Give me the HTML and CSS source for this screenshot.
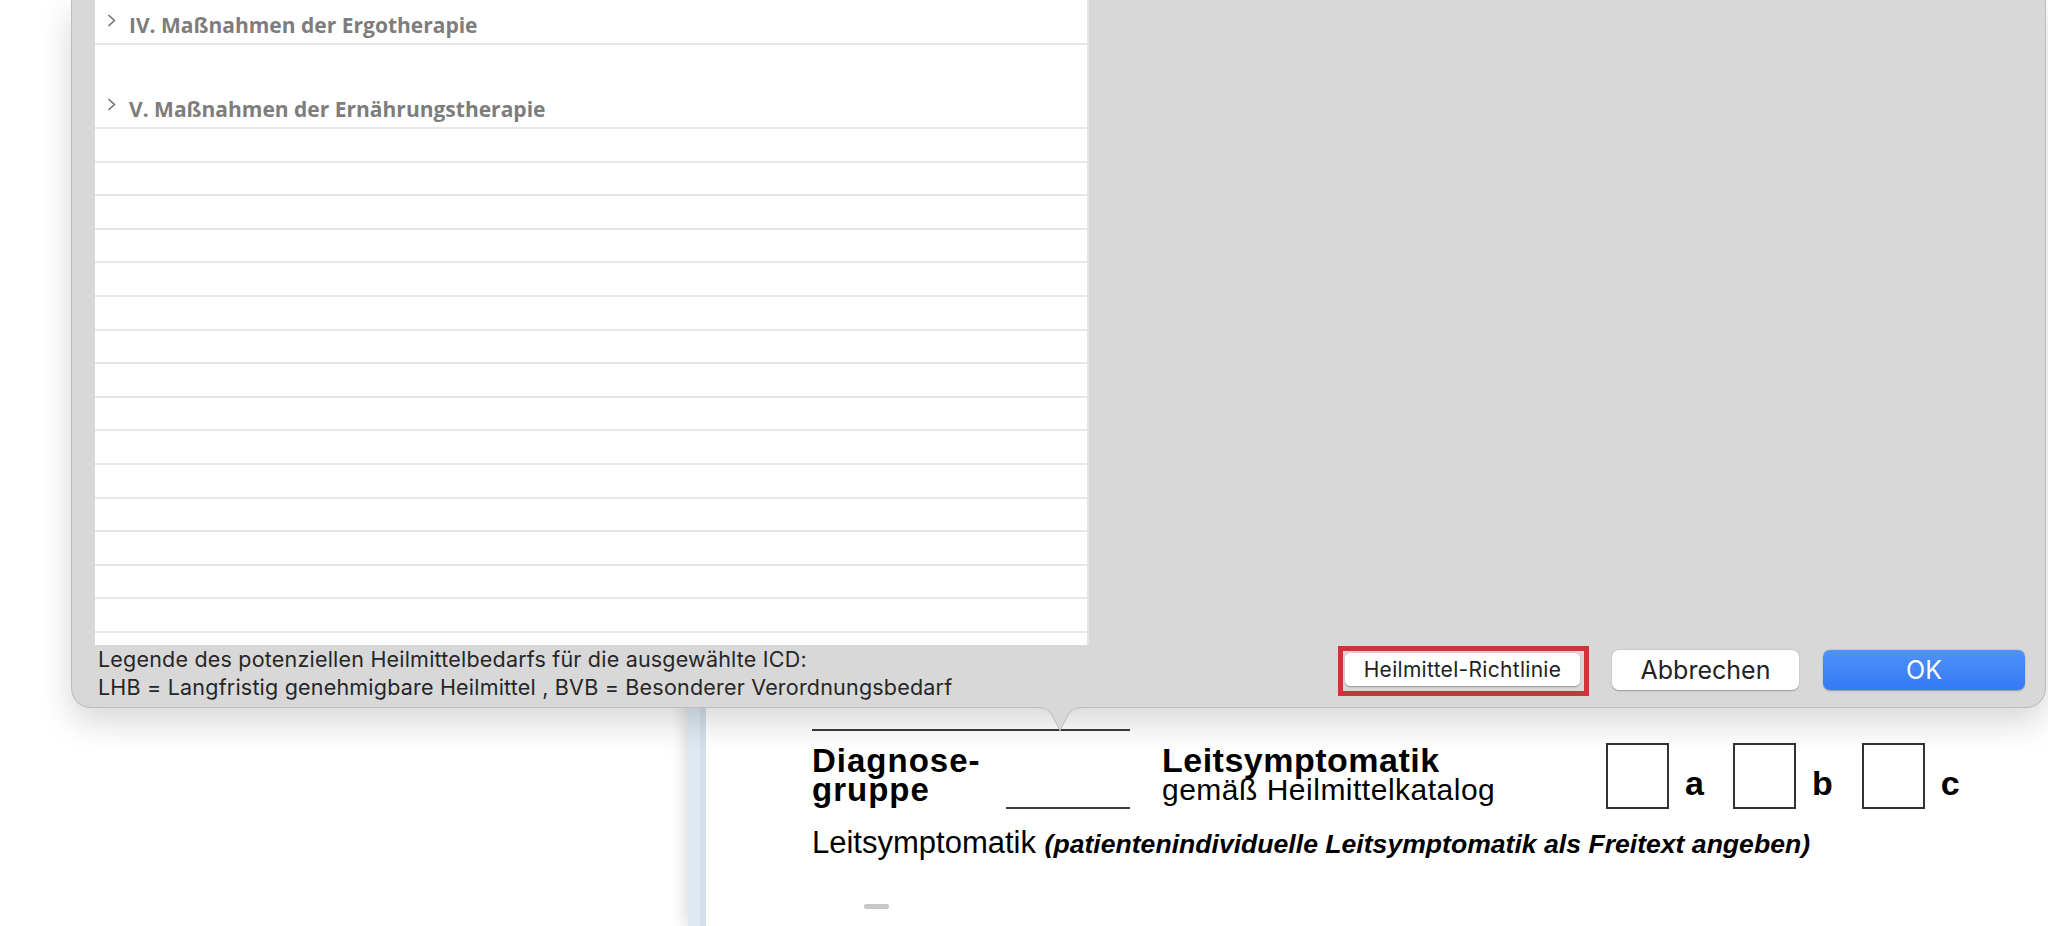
FILE: index.html
```html
<!DOCTYPE html>
<html lang="de">

<head>
  <meta charset="UTF-8" />
  <title>Heilmittel-Auswahl</title>
  <link rel="stylesheet" href="styles.css">
</head>

<body>
  <div class="desk">
    <div class="doc-window">
      <div class="doc-edge"></div>
      <div class="doc-page">
        <div class="rule-top"></div>
        <div class="head-row">
          <div class="dg">Diagnose-<br>gruppe</div>
          <div class="dg-field"></div>
          <div class="ls">
            <div class="ls-title">Leitsymptomatik</div>
            <div class="ls-sub">gemäß Heilmittelkatalog</div>
          </div>
          <div class="opts">
            <div class="opt"><span class="box"></span><span class="opt-label">a</span></div>
            <div class="opt"><span class="box"></span><span class="opt-label">b</span></div>
            <div class="opt"><span class="box"></span><span class="opt-label">c</span></div>
          </div>
        </div>
        <p class="ls-line">Leitsymptomatik <b><i>(patientenindividuelle Leitsymptomatik als Freitext angeben)</i></b></p>
        <div class="dash"></div>
      </div>
    </div>

    <div class="popover">
      <div class="pop-body">
        <div class="tree">
          <div class="row group first">
            <svg class="chev" viewBox="0 0 9 13"><path d="M1.5 1 L7.5 6.5 L1.5 12" /></svg>
            <span>IV. Maßnahmen der Ergotherapie</span>
          </div>
          <div class="row group">
            <svg class="chev" viewBox="0 0 9 13"><path d="M1.5 1 L7.5 6.5 L1.5 12" /></svg>
            <span>V. Maßnahmen der Ernährungstherapie</span>
          </div>
          <div class="row"></div>
          <div class="row"></div>
          <div class="row"></div>
          <div class="row"></div>
          <div class="row"></div>
          <div class="row"></div>
          <div class="row"></div>
          <div class="row"></div>
          <div class="row"></div>
          <div class="row"></div>
          <div class="row"></div>
          <div class="row"></div>
          <div class="row"></div>
          <div class="row"></div>
          <div class="row"></div>
          <div class="row"></div>
        </div>
      </div>
      <div class="pop-footer">
        <div class="legend">
          Legende des potenziellen Heilmittelbedarfs für die ausgewählte ICD:<br>
          LHB = Langfristig genehmigbare Heilmittel , BVB = Besonderer Verordnungsbedarf
        </div>
        <div class="actions">
          <div class="highlight"><button class="btn small">Heilmittel-Richtlinie</button></div>
          <button class="btn cancel">Abbrechen</button>
          <button class="btn primary">OK</button>
        </div>
      </div>
      <svg class="pop-arrow" viewBox="0 0 56 26">
        <path class="arrow-fill" d="M0 0 H56 V1 C44 1 40 2 36 9 L28 25 L20 9 C16 2 12 1 0 1 Z" />
        <path class="arrow-line" d="M0 1.5 C12 1.5 16 2.5 20 9 L28 24.5 L36 9 C40 2.5 44 1.5 56 1.5" />
      </svg>
    </div>
  </div>
</body>

</html>
```

FILE: styles.css
```css
body {
  margin: 0;
  background-color: #ffffff;
  overflow: hidden;
}

.desk {
  position: relative;
  width: 2048px;
  height: 926px;
  overflow: hidden;
}

/* document window behind the popover */
.doc-window {
  position: absolute;
  left: 688px;
  top: 0;
  right: 0;
  bottom: 0;
  display: flex;
  background-color: #ffffff;
  box-shadow: -4px 0 14px rgba(0, 0, 0, 0.14);
}

.doc-edge {
  flex: none;
  width: 18px;
  background: linear-gradient(to right, #dfe9f2 0 12px, #d3dfea 12px);
}

.doc-page {
  flex: 1;
  padding: 729px 0 0 106px;
  font-family: "Liberation Sans", Arial, sans-serif;
  color: #000000;
}

.rule-top {
  width: 318px;
  height: 2px;
  background-color: #3b3b3b;
}

.head-row {
  display: flex;
  align-items: flex-start;
  margin-top: 15px;
}

.dg {
  width: 194px;
  font-size: 33px;
  font-weight: bold;
  line-height: 29px;
  letter-spacing: 1px;
}

.dg-field {
  width: 124px;
  height: 61px;
  border-bottom: 2px solid #3b3b3b;
}

.ls {
  width: 444px;
  margin-left: 32px;
}

.ls-title {
  font-size: 34px;
  font-weight: bold;
  line-height: 29px;
  letter-spacing: 0.5px;
}

.ls-sub {
  font-size: 30px;
  line-height: 29px;
  letter-spacing: 0.5px;
}

.opts {
  display: flex;
  margin-top: -3px;
}

.opt {
  display: flex;
  align-items: flex-end;
  gap: 16px;
  margin-right: 29px;
}

.box {
  width: 63px;
  height: 66px;
  border: 2px solid #333333;
  box-sizing: border-box;
}

.opt-label {
  font-size: 34px;
  font-weight: bold;
  line-height: 35px;
  margin-bottom: 8px;
}

.ls-line {
  margin: 16px 0 0 0;
  font-size: 31px;
  line-height: 36px;
}

.ls-line i {
  font-size: 26.6px;
}

.dash {
  width: 25px;
  height: 5px;
  margin: 42px 0 0 52px;
  border-radius: 2px;
  background-color: #c8c8c8;
}

/* popover */
.popover {
  position: absolute;
  left: 71px;
  top: 0;
  width: 1975px;
  height: 708px;
  box-sizing: border-box;
  display: flex;
  flex-direction: column;
  background-color: #d8d8d8;
  border: 1px solid #bdbdbd;
  border-top: none;
  border-radius: 0 0 20px 20px;
  box-shadow: 0 14px 34px rgba(0, 0, 0, 0.16);
  font-family: Inter, "Liberation Sans", sans-serif;
}

.pop-body {
  height: 645px;
  padding-left: 23px;
}

.tree {
  width: 992px;
  height: 645px;
  background-color: #ffffff;
  border-right: 2px solid #e5e5e5;
  overflow: hidden;
}

.row {
  height: 33.6px;
  box-sizing: border-box;
  border-bottom: 2px solid #e6e6e6;
}

.row.group {
  height: 84px;
  display: flex;
  align-items: flex-end;
  padding: 0 0 5px 12px;
  font-family: "Open Sans", sans-serif;
  font-size: 21px;
  font-weight: bold;
  line-height: 26px;
  color: #7d7d7d;
}

.row.group.first {
  height: 45px;
}

.chev {
  width: 9px;
  height: 13px;
  margin: 0 13px 11px 0;
}

.chev path {
  fill: none;
  stroke: #6f6f6f;
  stroke-width: 1.5;
}

.pop-footer {
  flex: 1;
  display: flex;
  justify-content: space-between;
  padding: 0 20px 0 26px;
}

.legend {
  font-size: 21.5px;
  line-height: 28px;
  letter-spacing: 0.2px;
  color: #262626;
}

.actions {
  display: flex;
  align-items: flex-start;
  gap: 23px;
  padding-top: 1px;
}

.highlight {
  border: 5px solid #c8373a;
  padding: 2px 4px 5px 2px;
}

.btn {
  display: block;
  height: 40px;
  margin-top: 4px;
  border: none;
  border-radius: 7px;
  background-color: #ffffff;
  box-shadow: 0 0.5px 1.5px rgba(0, 0, 0, 0.3);
  font-family: Inter, "Liberation Sans", sans-serif;
  font-size: 25px;
  color: #222222;
  padding: 0;
}

.btn.small {
  width: 235px;
  height: 33px;
  margin-top: 0;
  border-radius: 5px;
  font-size: 21px;
  letter-spacing: 0.3px;
}

.btn.cancel {
  width: 187px;
}

.btn.primary {
  width: 202px;
  margin-left: 1px;
  background: linear-gradient(#4f92f8, #3479f6);
  color: #ffffff;
}

.pop-arrow {
  position: absolute;
  left: 960px;
  top: 706px;
  width: 56px;
  height: 26px;
}

.arrow-fill {
  fill: #d8d8d8;
}

.arrow-line {
  fill: none;
  stroke: #bdbdbd;
  stroke-width: 1;
}
```
